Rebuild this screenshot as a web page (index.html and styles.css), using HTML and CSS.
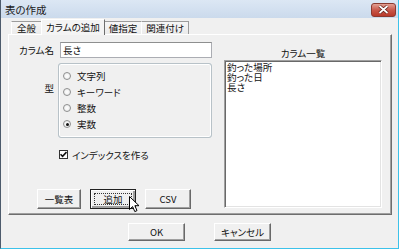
FILE: index.html
```html
<!DOCTYPE html>
<html lang="ja">
<head>
    <meta charset="UTF-8">
    <title>表の作成</title>
    <link rel="stylesheet" href="styles.css">
</head>
<body>
    <div class="window">
        <div class="titlebar">
            <span class="title">表の作成</span>
            <span class="close-btn">
                <svg width="11" height="9" viewBox="0 0 11 9">
                    <path d="M1.5 1 L9.5 8 M9.5 1 L1.5 8" stroke="#5a1a14" stroke-width="3.2"/>
                    <path d="M1.5 1 L9.5 8 M9.5 1 L1.5 8" stroke="#fff" stroke-width="1.7"/>
                </svg>
            </span>
        </div>

        <div class="client">
            <div class="tabs">
                <div class="tab tab-general">全般</div>
                <div class="tab active">カラムの追加</div>
                <div class="tab">値指定</div>
                <div class="tab">関連付け</div>
            </div>

            <div class="panel">
                <div class="left-col">
                    <div class="field-row">
                        <span class="field-label">カラム名</span>
                        <div class="textbox">長さ</div>
                    </div>

                    <div class="field-row type-row">
                        <span class="field-label type-label">型</span>
                        <div class="groupbox">
                            <div class="radio"><span class="radio-dot"></span>文字列</div>
                            <div class="radio"><span class="radio-dot"></span>キーワード</div>
                            <div class="radio"><span class="radio-dot"></span>整数</div>
                            <div class="radio"><span class="radio-dot checked"></span>実数</div>
                        </div>
                    </div>

                    <div class="check-row">
                        <span class="checkbox">
                            <svg width="7" height="7" viewBox="0 0 7 7">
                                <path d="M0.5 3.2 L2.6 5.4 L6.5 1" stroke="#111" stroke-width="1.6" fill="none"/>
                            </svg>
                        </span>
                        インデックスを作る
                    </div>

                    <div class="panel-buttons">
                        <div class="btn btn-list">一覧表</div>
                        <div class="btn btn-default"><span class="focus">追加</span></div>
                        <div class="btn">CSV</div>
                    </div>
                </div>

                <div class="right-col">
                    <div class="list-title">カラム一覧</div>
                    <div class="listbox">
                        <div class="list-item">釣った場所</div>
                        <div class="list-item">釣った日</div>
                        <div class="list-item">長さ</div>
                    </div>
                </div>
            </div>

            <div class="footer">
                <div class="btn btn-footer">OK</div>
                <div class="btn btn-footer">キャンセル</div>
            </div>
        </div>

        <!-- mouse pointer over the 追加 button -->
        <svg class="cursor" width="12" height="18" viewBox="0 0 12 18">
            <path d="M0.5 0.5 L0.5 13.5 L3.6 10.6 L5.8 15.6 L8 14.6 L5.9 9.7 L10 9.7 Z" fill="#fff" stroke="#000" stroke-width="1"/>
        </svg>
    </div>
</body>
</html>
```

FILE: styles.css
```css
/* General styles */
body {
    margin: 0;
    background: #fff;
    font-family: "Noto Sans CJK JP", "Liberation Sans", sans-serif;
    font-size: 9.5px;
    font-feature-settings: "palt";
    color: #111;
}

.window {
    position: relative;
    box-sizing: border-box;
    width: 399px;
    height: 249px;
    background: #d3e0ef;
    border-left: 1px solid #4d5b6c;
    border-right: 1px solid #3cc2ea;
    border-bottom: 1px solid #3cc2ea;
    display: flex;
    flex-direction: column;
}

/* Title bar */
.titlebar {
    height: 18px;
    display: flex;
    align-items: center;
    justify-content: space-between;
    padding: 0 2px 0 4px;
    background: linear-gradient(to bottom, #dce7f4, #cbdaec);
}

.title {
    font-size: 10.5px;
    color: #1a1a1a;
}

.close-btn {
    width: 23px;
    height: 12px;
    margin-top: 1px;
    display: flex;
    align-items: center;
    justify-content: center;
    border: 1px solid #8a3a30;
    border-radius: 3px;
    background: linear-gradient(to bottom, #e3a093, #c9584a 50%, #b8392a);
}

/* Client area */
.client {
    flex: 1;
    background: #f0f0f0;
    padding: 1px 0 0 7px;
}

.tabs {
    display: flex;
    align-items: flex-end;
    height: 15px;
    margin-left: 4px;
}

.tab {
    height: 12px;
    line-height: 12px;
    padding: 0 4px;
    border: 1px solid #9c9c9c;
    border-bottom: none;
    border-left-color: #fff;
    background: linear-gradient(to bottom, #f6f6f6, #ebebeb);
    margin-left: -1px;
}

.tab-general {
    padding: 0 5px;
}

.tab.active {
    height: 15px;
    line-height: 14px;
    padding: 0 4px;
    margin-bottom: -1px;
    background: #f4f4f4;
    border-color: #fff #6e6e6e #fff #fff;
    position: relative;
    z-index: 1;
}

/* Tab page */
.panel {
    box-sizing: border-box;
    width: 384px;
    height: 181px;
    display: flex;
    padding-top: 7px;
    border: 1px solid #fff;
    border-right-color: #6e6e6e;
    border-bottom-color: #6e6e6e;
    box-shadow: inset -1px -1px 0 #a0a0a0;
}

.left-col {
    width: 203px;
    display: flex;
    flex-direction: column;
}

.field-row {
    display: flex;
    gap: 4px;
}

.field-label {
    width: 45px;
    text-align: right;
    line-height: 16px;
}

.type-label {
    line-height: 10px;
    margin-top: 20px;
}

.textbox {
    box-sizing: border-box;
    width: 152px;
    height: 16px;
    margin-left: 2px;
    padding-left: 2px;
    line-height: 14px;
    background: #fff;
    border: 1px solid #abadb3;
    border-top-color: #8e8f8f;
}

.type-row {
    margin-top: 5px;
}

.groupbox {
    box-sizing: border-box;
    width: 154px;
    height: 75px;
    padding: 4px 0 0 4px;
    border: 1px solid #d5dfe5;
    border-radius: 3px;
    box-shadow: inset 0 0 0 1px #fff;
    outline: 1px solid #b8c2c8;
    outline-offset: -1px;
}

.radio {
    height: 16px;
    display: flex;
    align-items: center;
    gap: 6px;
}

.radio-dot {
    box-sizing: border-box;
    width: 8px;
    height: 8px;
    border: 1px solid #8e8f8f;
    border-radius: 50%;
    background: radial-gradient(circle, #fff, #e6e6e6);
    display: flex;
    align-items: center;
    justify-content: center;
}

.radio-dot.checked::after {
    content: "";
    width: 3px;
    height: 3px;
    border-radius: 50%;
    background: #111;
}

/* Checkbox */
.check-row {
    display: flex;
    align-items: center;
    gap: 4px;
    height: 13px;
    margin-top: 10px;
    padding-left: 50px;
}

.checkbox {
    box-sizing: border-box;
    width: 9px;
    height: 9px;
    border: 1px solid #333;
    background: #fff;
    display: flex;
    align-items: center;
    justify-content: center;
}

/* Buttons */
.panel-buttons {
    display: flex;
    gap: 9px;
    margin-top: 28px;
    padding-left: 28px;
}

.btn {
    box-sizing: border-box;
    width: 46px;
    height: 20px;
    display: flex;
    align-items: center;
    justify-content: center;
    background: #f0f0f0;
    border: 1px solid #fff;
    border-right-color: #696969;
    border-bottom-color: #696969;
    box-shadow: inset -1px -1px 0 #a0a0a0;
}

.btn-list {
    width: 44px;
}

.btn-default {
    border: 1px solid #222;
    box-shadow: inset 1px 1px 0 #fff, inset -2px -2px 0 #a0a0a0;
}

.btn-default .focus {
    box-sizing: border-box;
    width: 38px;
    height: 12px;
    line-height: 10px;
    text-align: center;
    border: 1px dotted #333;
}

/* Column list */
.right-col {
    margin-left: 12px;
    width: 158px;
}

.list-title {
    margin-top: 5px;
    height: 13px;
    line-height: 12px;
    text-align: center;
}

.listbox {
    box-sizing: border-box;
    height: 148px;
    padding: 1px 2px;
    background: #fff;
    border: 1px solid #fff;
    border-top-color: #a0a0a0;
    border-left-color: #a0a0a0;
    box-shadow: inset 1px 1px 0 #696969, inset -1px -1px 0 #e3e3e3;
}

.list-item {
    line-height: 10px;
}

/* Dialog buttons */
.footer {
    display: flex;
    justify-content: center;
    gap: 29px;
    margin-top: 8px;
    padding-right: 7px;
}

.btn-footer {
    width: 57px;
    height: 18px;
}

.cursor {
    position: absolute;
    left: 128px;
    top: 196px;
}
```
